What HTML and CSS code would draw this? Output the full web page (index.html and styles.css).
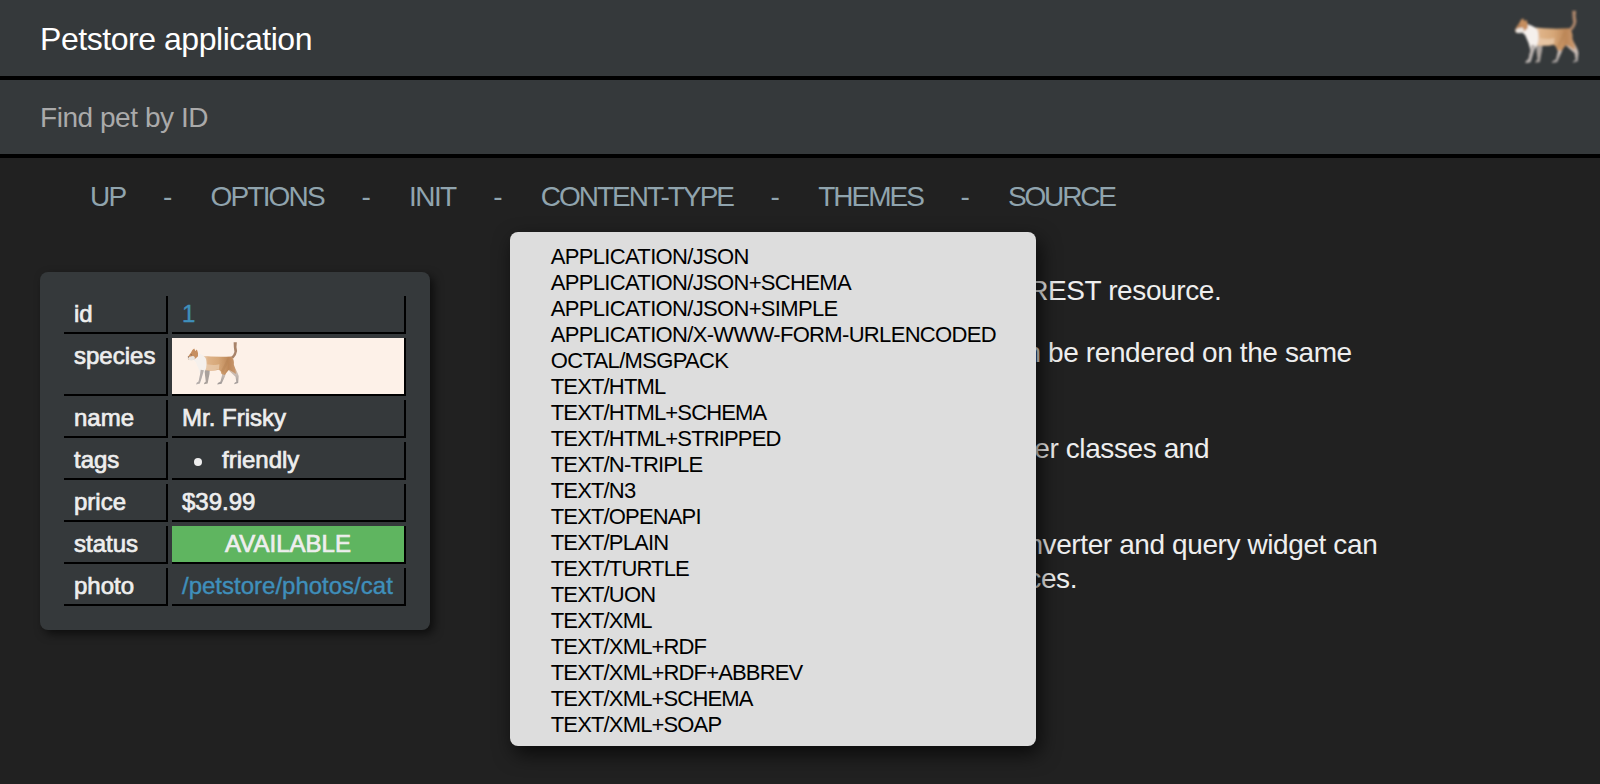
FILE: index.html
```html
<!DOCTYPE html>
<html lang="en">
<head>
<meta charset="utf-8">
<title>Petstore application</title>
<link rel="stylesheet" href="styles.css">
</head>
<body>
<svg class="defs" width="0" height="0" aria-hidden="true">
  <defs>
    <linearGradient id="fur" x1="95" y1="0" x2="225" y2="0" gradientUnits="userSpaceOnUse">
      <stop offset="0" stop-color="#f3ebe4"/><stop offset=".2" stop-color="#dfb388"/><stop offset=".5" stop-color="#d6a778"/><stop offset=".8" stop-color="#bd8758"/><stop offset="1" stop-color="#c99a72"/>
    </linearGradient>
    <linearGradient id="leg" x1="0" y1="125" x2="0" y2="188" gradientUnits="userSpaceOnUse">
      <stop offset="0" stop-color="#d8b596"/><stop offset=".4" stop-color="#c9bcb4"/><stop offset="1" stop-color="#9c9796"/>
    </linearGradient>
    <filter id="soft" x="-10%" y="-10%" width="120%" height="120%"><feGaussianBlur stdDeviation="2.4"/></filter>
    <symbol id="cat" viewBox="40 25 200 168">
      <g filter="url(#soft)">
        <path d="M217 30 L229 30 Q226 46 230 62 Q228 78 216 90 L206 86 Q217 78 220 66 Q217 48 217 30Z" fill="#a88369"/>
        <path d="M108 128 L128 130 Q128 150 124 162 L120 184 L106 186 L108 181 L113 176 Q110 155 108 128Z" fill="#a9a19c"/>
        <path d="M168 118 L192 122 Q190 146 184 158 L172 185 L156 187 L158 182 L168 176 L174 152Z" fill="url(#leg)"/>
        <path d="M192 106 L216 116 Q232 140 236 156 L234 182 L219 186 L221 181 L227 177 L224 158 L200 136Z" fill="url(#leg)"/>
        <path d="M96 80 Q150 86 208 83 Q220 92 218 114 Q226 132 226 148 Q210 138 200 132 Q190 142 184 152 L172 148 Q170 136 162 132 Q138 138 110 134Z" fill="url(#fur)"/>
        <path d="M194 88 Q200 102 190 118 Q182 130 178 144 L170 136 Q184 112 194 88Z" fill="#b58354" opacity=".45"/>
        <path d="M118 112 Q145 118 164 112 L162 130 Q138 137 114 132Z" fill="#e9cdb0" opacity=".7"/>
        <path d="M82 70 Q106 76 114 92 Q119 118 112 132 Q106 140 102 152 L92 184 L77 187 L79 181 L86 176 L92 148 Q88 128 76 104 Q68 94 62 95Z" fill="#f5f0ec"/>
        <path d="M94 132 L106 134 L98 162 L91 184 L77 187 L79 181 L86 176 L92 148Z" fill="#b5adaa"/>
        <path d="M58 68 Q62 56 70 53 L74 62 L80 57 L84 70 L84 82 Q74 94 62 96 L49 96 Q44 90 47 84 Q52 76 58 68Z" fill="#c68e5f"/>
        <path d="M46 86 L60 82 Q68 78 72 86 L72 94 L60 98 L49 96Z" fill="#e9e4df"/>
        <path d="M45 84 L50 83 L49 88Z M56 74 L62 76 L58 79Z" fill="#6c5448"/>
      </g>
    </symbol>
  </defs>
</svg>

<header class="bar title-bar">
  <h1 class="title">Petstore application</h1>
  <svg class="logo"><use href="#cat"/></svg>
</header>
<div class="bar search-bar"><span>Find pet by ID</span></div>

<nav class="nav">
  <a class="nav-up">UP</a><i>-</i>
  <a class="nav-options">OPTIONS</a><i>-</i>
  <a class="nav-init">INIT</a><i>-</i>
  <div class="nav-menu">
    <a class="nav-content">CONTENT-TYPE</a>
    <ul class="popup">
      <li class="wide">APPLICATION/JSON</li>
      <li class="wide">APPLICATION/JSON+SCHEMA</li>
      <li class="wide">APPLICATION/JSON+SIMPLE</li>
      <li class="wide">APPLICATION/X-WWW-FORM-URLENCODED</li>
      <li class="wide">OCTAL/MSGPACK</li>
      <li>TEXT/HTML</li>
      <li>TEXT/HTML+SCHEMA</li>
      <li>TEXT/HTML+STRIPPED</li>
      <li>TEXT/N-TRIPLE</li>
      <li>TEXT/N3</li>
      <li>TEXT/OPENAPI</li>
      <li>TEXT/PLAIN</li>
      <li>TEXT/TURTLE</li>
      <li>TEXT/UON</li>
      <li>TEXT/XML</li>
      <li>TEXT/XML+RDF</li>
      <li>TEXT/XML+RDF+ABBREV</li>
      <li>TEXT/XML+SCHEMA</li>
      <li>TEXT/XML+SOAP</li>
    </ul>
  </div><i>-</i>
  <a class="nav-themes">THEMES</a><i>-</i>
  <a class="nav-source">SOURCE</a>
</nav>

<main class="content">
  <section class="card">
    <table class="pet">
      <tr><td>id</td><td><a>1</a></td></tr>
      <tr class="species"><td>species</td><td class="peach"><svg class="thumb"><use href="#cat"/></svg></td></tr>
      <tr><td>name</td><td>Mr. Frisky</td></tr>
      <tr><td>tags</td><td><ul><li>friendly</li></ul></td></tr>
      <tr><td>price</td><td>$39.99</td></tr>
      <tr><td>status</td><td class="available">AVAILABLE</td></tr>
      <tr><td>photo</td><td><a>/petstore/photos/cat</a></td></tr>
    </table>
  </section>
  <aside class="about">
    <p class="p1">This page shows a standard nested REST resource.</p>
    <p class="p2">It shows how different properties can be rendered on the same<br>bean in different views.</p>
    <p class="p3">It also shows examples of HtmlRender classes and<br>@BeanProperty annotations.</p>
    <p class="p4">It also shows how the Queryable converter and query widget can<br><span>be used to create searchable interfaces.</span></p>
  </aside>
</main>
</body>
</html>
```

FILE: styles.css
```css
* { box-sizing: border-box; }
html, body { height: 100%; }
body {
  margin: 0;
  background: #212121;
  color: #eee;
  font-family: "Liberation Sans", Arial, sans-serif;
  font-size: 28px;
  overflow: hidden;
}
.defs { position: absolute; }

.bar {
  display: flex;
  justify-content: space-between;
  padding-left: 40px;
  background: #35393b;
  border-bottom: 4px solid #000;
}
.title-bar { height: 80px; }
.title {
  margin: 0;
  font-size: 32px;
  font-weight: 400;
  line-height: 78px;
  letter-spacing: -0.45px;
  color: #fff;
}
.logo { width: 67px; height: 56px; margin: 9px 20px 0 0; }
.search-bar {
  height: 78px;
  line-height: 76px;
  letter-spacing: -0.45px;
  color: #aaa;
}

.nav {
  display: flex;
  gap: 37.6px;
  height: 78px;
  padding-left: 90px;
  line-height: 78px;
  color: #90a4ae;
}
.nav i { width: 10px; font-style: normal; }
.nav-up { letter-spacing: -1.8px; }
.nav-options { letter-spacing: -1.8px; }
.nav-init { letter-spacing: -1.6px; }
.nav-content { letter-spacing: -2px; }
.nav-themes { letter-spacing: -2px; }
.nav-source { letter-spacing: -2.2px; }
.nav-menu { position: relative; }
.popup {
  position: absolute;
  top: 74px;
  left: -31px;
  z-index: 2;
  width: 526px;
  height: 514px;
  margin: 0;
  padding: 12px 0 0 41px;
  list-style: none;
  border-radius: 8px;
  background: #ddd;
  box-shadow: 4px 8px 20px rgba(0, 0, 0, .7);
  color: #000;
  font-size: 22px;
  line-height: 26px;
  letter-spacing: -0.85px;
}
.popup .wide { letter-spacing: -0.67px; }

.content { display: flex; align-items: flex-start; padding: 36px 0 0 40px; }
.card {
  width: 390px;
  height: 358px;
  padding: 20px;
  border-radius: 8px;
  background: #35393b;
  box-shadow: 4px 4px 10px rgba(0, 0, 0, .6);
}
.pet {
  border-spacing: 4px;
  font-size: 24px;
  line-height: 28px;
  -webkit-text-stroke: .7px;
}
.pet td {
  height: 38px;
  padding: 4px 10px;
  border-right: 2px solid #000;
  border-bottom: 2px solid #000;
  vertical-align: top;
}
.pet td:first-child { width: 104px; }
.pet td:last-child { width: 234px; }
.pet .species td { height: 58px; }
.pet ul { margin: 0; padding-left: 12px; list-style: none; }
.pet li { display: flex; align-items: center; gap: 20px; }
.pet li::before {
  content: "";
  width: 8px;
  height: 8px;
  margin-top: 3px;
  border-radius: 50%;
  background: #eee;
}
.pet a { color: #3f8fbb; -webkit-text-stroke: .4px; }
.pet .peach { padding: 3px 14px 0; background: #fdf1e8; }
.thumb { display: block; width: 54px; height: 45px; }
.pet .available { background: #5fb560; text-align: center; }

.about { padding: 2px 0 0 162px; line-height: 34px; letter-spacing: -0.4px; white-space: nowrap; }
.about p { margin: 0 0 28px; }
.about .p2 { padding-left: 8px; }
.about .p3 { padding-left: 3px; }
.about .p4 { padding-left: 7px; }
.about .p4 span { margin-left: -4px; }
```
